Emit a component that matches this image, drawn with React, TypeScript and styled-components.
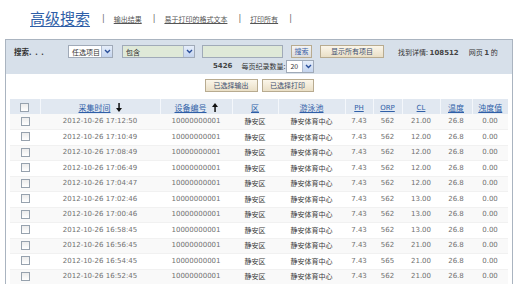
import React from "react";
import styled, { createGlobalStyle } from "styled-components";

const Global = createGlobalStyle`
  html, body { margin: 0; padding: 0; background: #fff; }
  body { font-family: "DejaVu Sans", "Noto Sans CJK SC", sans-serif; color: #444; }
  * { box-sizing: border-box; }
`;

const Page = styled.div`
  width: 519px;
  height: 284px;
  overflow: hidden;
`;

const TopBar = styled.div`
  display: flex;
  align-items: center;
  height: 39px;
  padding: 0 0 4px 30px;
`;

const Title = styled.a`
  font-family: "Noto Sans CJK SC", sans-serif;
  font-size: 15px;
  color: #2f5fa8;
  text-decoration: underline;
  text-underline-offset: 2px;
  line-height: 1;
  margin-right: 12px;
`;

const NavSep = styled.span`
  font-size: 8px;
  color: #666;
  margin: 2px 9px 0 0;
`;

const NavLink = styled.a`
  font-family: "Noto Sans CJK SC", sans-serif;
  font-size: 7px;
  color: #555;
  text-decoration: underline;
  margin: 2px 11px 0 0;
`;

const Box = styled.div`
  margin-left: 5px;
  width: 508px;
  height: 245px;
  border: 1px solid #aab4c0;
  border-bottom: none;
  overflow: hidden;
`;

const SearchPanel = styled.div`
  background: #d7e0ea;
  height: 34px;
  padding: 4px 0 0 8px;
  font-size: 7px;
`;

const Row = styled.div<{ $h: number }>`
  display: flex;
  align-items: center;
  height: ${(p) => p.$h}px;
`;

const Label = styled.span<{ $w?: number; $ml?: number; $bold?: boolean }>`
  font-family: "Noto Sans CJK SC", sans-serif;
  font-size: 7px;
  color: #333;
  font-weight: ${(p) => (p.$bold ? 700 : 400)};
  width: ${(p) => (p.$w ? `${p.$w}px` : "auto")};
  margin-left: ${(p) => p.$ml ?? 0}px;
  white-space: nowrap;
`;

const SearchTitle = styled.span`
  font-family: "Noto Sans CJK SC", sans-serif;
  font-size: 7.5px;
  font-weight: 700;
  color: #333;
  width: 54px;
  white-space: nowrap;
  word-spacing: 2px;
`;

const Num = styled.span<{ $ml?: number }>`
  font-family: "DejaVu Sans", sans-serif;
  font-size: 7px;
  font-weight: 700;
  color: #444;
  margin-left: ${(p) => p.$ml ?? 0}px;
`;

const Select = styled.div<{ $w: number; $ml?: number; $bg?: string }>`
  display: flex;
  align-items: center;
  justify-content: space-between;
  width: ${(p) => p.$w}px;
  height: 13px;
  margin-left: ${(p) => p.$ml ?? 0}px;
  background: ${(p) => p.$bg ?? "#fff"};
  border: 1px solid #a0aab8;
  padding-left: 3px;
  font-family: "Noto Sans CJK SC", sans-serif;
  font-size: 7px;
  color: #333;
`;

const SelectArrow = styled.span`
  width: 11px;
  height: 11px;
  background: linear-gradient(#e6eefa, #c4d4ee);
  border-left: 1px solid #b0bcd0;
  display: flex;
  align-items: center;
  justify-content: center;
`;

const Input = styled.div<{ $w: number; $ml?: number }>`
  width: ${(p) => p.$w}px;
  height: 13px;
  margin-left: ${(p) => p.$ml ?? 0}px;
  background: #dfe9d8;
  border: 1px solid #a0aab8;
`;

const Button = styled.button<{ $w: number; $ml?: number; $blue?: boolean }>`
  width: ${(p) => p.$w}px;
  height: 13px;
  margin-left: ${(p) => p.$ml ?? 0}px;
  padding: 0;
  background: ${(p) => (p.$blue ? "linear-gradient(#f4f4f4, #dcdcdc)" : "linear-gradient(#fbf6ea, #eadfc6)")};
  border: 1px solid #b8ab90;
  font-family: "Noto Sans CJK SC", sans-serif;
  font-size: 7px;
  color: ${(p) => (p.$blue ? "#3a5fa8" : "#3d4f70")};
  line-height: 11px;
  cursor: pointer;
`;

const ActionRow = styled.div`
  display: flex;
  justify-content: center;
  gap: 4px;
  padding-top: 5px;
  height: 25px;
`;

const Table = styled.table`
  margin-left: 4px;
  width: 498px;
  border-collapse: collapse;
  table-layout: fixed;
`;

const HeadCell = styled.th`
  height: 15px;
  line-height: 12px;
  padding: 0;
  background: #e1e8f1;
  border-right: 1px solid #f4f7fb;
  text-align: center;
  font-weight: 400;
  white-space: nowrap;
  &:last-child { border-right: none; }
`;

const HeadLink = styled.a`
  font-family: "Noto Sans CJK SC", sans-serif;
  font-size: 8px;
  color: #2f5fa8;
  text-decoration: underline;
`;

const HeadLatin = styled(HeadLink)`
  font-family: "DejaVu Sans", sans-serif;
  font-size: 7px;
`;

const Cell = styled.td<{ $cjk?: boolean; $dark?: boolean }>`
  height: 15.5px;
  line-height: 11px;
  padding: 0;
  text-align: center;
  white-space: nowrap;
  font-family: ${(p) => (p.$cjk ? '"Noto Sans CJK SC", sans-serif' : '"DejaVu Sans", sans-serif')};
  font-size: 7px;
  color: ${(p) => (p.$dark ? "#3a3a3a" : "#707070")};
  border-bottom: 1px solid #f1f1f1;
`;

const DataRow = styled.tr<{ $alt: boolean }>`
  background: ${(p) => (p.$alt ? "#f9f9f9" : "#fff")};
`;

const Check = styled.span`
  display: inline-block;
  width: 9px;
  height: 9px;
  border: 1px solid #97a2ae;
  background: linear-gradient(#ececec, #fff);
  vertical-align: middle;
`;

const Arrow = ({ up }: { up?: boolean }) => (
  <svg width="6" height="9" viewBox="0 0 6 9" style={{ marginLeft: 5, verticalAlign: "-1px" }}>
    {up ? (
      <>
        <polygon points="3,0 6,4 0,4" fill="#111" />
        <rect x="2.3" y="3.5" width="1.5" height="5.5" fill="#111" />
      </>
    ) : (
      <>
        <rect x="2.3" y="0" width="1.5" height="5.5" fill="#111" />
        <polygon points="3,9 6,5 0,5" fill="#111" />
      </>
    )}
  </svg>
);

const Caret = () => (
  <svg width="7" height="5" viewBox="0 0 7 5">
    <path d="M1 1 L3.5 3.5 L6 1" stroke="#2a4f9a" strokeWidth="1.4" fill="none" />
  </svg>
);

const rows = [
  ["17:12:50", "562", "21.00"],
  ["17:10:49", "562", "12.00"],
  ["17:08:49", "562", "12.00"],
  ["17:06:49", "562", "12.00"],
  ["17:04:47", "562", "12.00"],
  ["17:02:46", "562", "13.00"],
  ["17:00:46", "562", "13.00"],
  ["16:58:45", "562", "13.00"],
  ["16:56:45", "562", "21.00"],
  ["16:54:45", "565", "21.00"],
  ["16:52:45", "562", "21.00"],
];

const cols = [30, 120, 72, 46, 67, 28, 29, 38, 32, 36];

export default function App() {
  return (
    <Page>
      <Global />
      <TopBar>
        <Title>高级搜索</Title>
        <NavSep>|</NavSep>
        <NavLink>输出结果</NavLink>
        <NavSep>|</NavSep>
        <NavLink>易于打印的格式文本</NavLink>
        <NavSep>|</NavSep>
        <NavLink>打印所有</NavLink>
        <NavSep>|</NavSep>
      </TopBar>
      <Box>
        <SearchPanel>
          <Row $h={15}>
            <SearchTitle>搜索. . .</SearchTitle>
            <Select $w={45}>
              任选项目
              <SelectArrow><Caret /></SelectArrow>
            </Select>
            <Select $w={73} $ml={9} $bg="#dfe9d8">
              包含
              <SelectArrow><Caret /></SelectArrow>
            </Select>
            <Input $w={81} $ml={7} />
            <Button $w={21} $ml={8} $blue>搜索</Button>
            <Button $w={64} $ml={8}>显示所有项目</Button>
            <Label $ml={14}>
              找到详情: <Num>108512</Num>
            </Label>
            <Label $ml={10}>
              网页 <Num>1</Num> 的
            </Label>
          </Row>
          <Row $h={14}>
            <Num $ml={199}>5426</Num>
            <Label $ml={9}>每页纪录数量:</Label>
            <Select $w={28} $ml={1}>
              20
              <SelectArrow><Caret /></SelectArrow>
            </Select>
          </Row>
        </SearchPanel>
        <ActionRow>
          <Button $w={53}>已选择输出</Button>
          <Button $w={52}>已选择打印</Button>
        </ActionRow>
        <Table>
          <colgroup>
            {cols.map((w, i) => (
              <col key={i} style={{ width: w }} />
            ))}
          </colgroup>
          <thead>
            <tr>
              <HeadCell><Check /></HeadCell>
              <HeadCell><HeadLink>采集时间</HeadLink><Arrow /></HeadCell>
              <HeadCell><HeadLink>设备编号</HeadLink><Arrow up /></HeadCell>
              <HeadCell><HeadLink>区</HeadLink></HeadCell>
              <HeadCell><HeadLink>游泳池</HeadLink></HeadCell>
              <HeadCell><HeadLatin>PH</HeadLatin></HeadCell>
              <HeadCell><HeadLatin>ORP</HeadLatin></HeadCell>
              <HeadCell><HeadLatin>CL</HeadLatin></HeadCell>
              <HeadCell><HeadLink>温度</HeadLink></HeadCell>
              <HeadCell><HeadLink>浊度值</HeadLink></HeadCell>
            </tr>
          </thead>
          <tbody>
            {rows.map(([t, orp, cl], i) => (
              <DataRow key={i} $alt={i % 2 === 0}>
                <Cell><Check /></Cell>
                <Cell>2012-10-26 {t}</Cell>
                <Cell>10000000001</Cell>
                <Cell $cjk $dark>静安区</Cell>
                <Cell $cjk $dark>静安体育中心</Cell>
                <Cell>7.43</Cell>
                <Cell>{orp}</Cell>
                <Cell>{cl}</Cell>
                <Cell>26.8</Cell>
                <Cell>0.00</Cell>
              </DataRow>
            ))}
          </tbody>
        </Table>
      </Box>
    </Page>
  );
}
